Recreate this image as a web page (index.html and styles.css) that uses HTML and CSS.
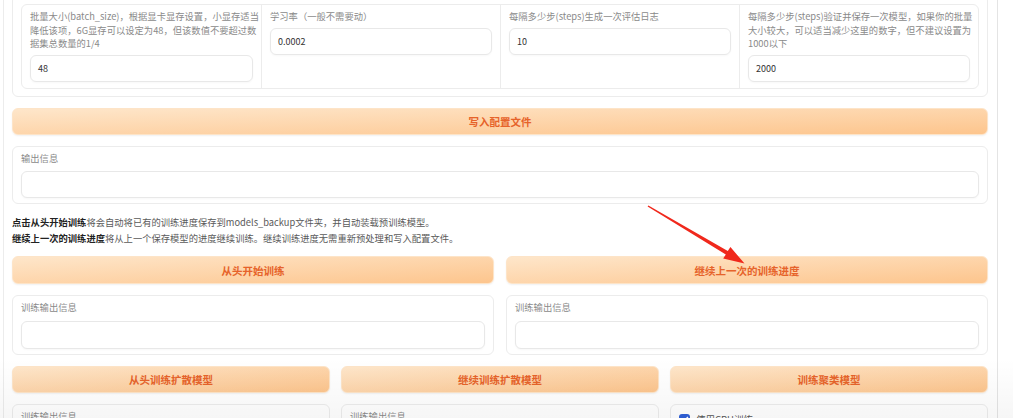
FILE: index.html
```html
<!DOCTYPE html>
<html lang="zh">
<head>
<meta charset="utf-8">
<link rel="stylesheet" href="styles.css">
</head>
<body>
<div class="page">
  <div class="panel top-panel">
    <div class="param-grid">
      <div class="param">
        <div class="label">批量大小(batch_size)，根据显卡显存设置，小显存适当<br>降低该项，6G显存可以设定为48，但该数值不要超过数<br>据集总数量的1/4</div>
        <div class="input">48</div>
      </div>
      <div class="param">
        <div class="label">学习率（一般不需要动）</div>
        <div class="input">0.0002</div>
      </div>
      <div class="param">
        <div class="label">每隔多少步(steps)生成一次评估日志</div>
        <div class="input">10</div>
      </div>
      <div class="param">
        <div class="label">每隔多少步(steps)验证并保存一次模型，如果你的批量<br>大小较大，可以适当减少这里的数字，但不建议设置为<br>1000以下</div>
        <div class="input">2000</div>
      </div>
    </div>
  </div>

  <button class="btn btn-wide">写入配置文件</button>

  <div class="panel out-panel">
    <div class="label">输出信息</div>
    <div class="textarea"></div>
  </div>

  <div class="note">
    <p><b>点击从头开始训练</b>将会自动将已有的训练进度保存到models_backup文件夹，并自动装载预训练模型。</p>
    <p><b>继续上一次的训练进度</b>将从上一个保存模型的进度继续训练。继续训练进度无需重新预处理和写入配置文件。</p>
  </div>

  <div class="row two">
    <button class="btn btn-tall">从头开始训练</button>
    <button class="btn btn-tall">继续上一次的训练进度</button>
  </div>

  <div class="row two">
    <div class="panel out-panel tall">
      <div class="label">训练输出信息</div>
      <div class="textarea"></div>
    </div>
    <div class="panel out-panel tall">
      <div class="label">训练输出信息</div>
      <div class="textarea"></div>
    </div>
  </div>

  <div class="row three">
    <button class="btn">从头训练扩散模型</button>
    <button class="btn">继续训练扩散模型</button>
    <button class="btn">训练聚类模型</button>
  </div>

  <div class="row three">
    <div class="panel out-panel tall">
      <div class="label">训练输出信息</div>
      <div class="textarea"></div>
    </div>
    <div class="panel out-panel tall">
      <div class="label">训练输出信息</div>
      <div class="textarea"></div>
    </div>
    <div class="panel out-panel tall">
      <label class="check"><span class="box"><svg viewBox="0 0 10 10" width="10" height="10"><path d="M2.2 5.2 L4.2 7.1 L7.9 3" fill="none" stroke="#fff" stroke-width="1.4"/></svg></span>使用CPU训练</label>
    </div>
  </div>
</div>

<svg class="arrow" width="1013" height="418" viewBox="0 0 1013 418">
  <polygon points="648.4,205.4 727.8,251.1 730.4,247.0 744.5,263.5 723.2,258.6 725.8,254.5 647.6,206.6" fill="#f0281c"/>
</svg>
<div class="shade"></div>
</body>
</html>
```

FILE: styles.css
```css
html, body {
  margin: 0;
  padding: 0;
  background: #ffffff;
}

body {
  position: relative;
  width: 1013px;
  height: 418px;
  overflow: hidden;
  font-family: "Noto Sans CJK SC", "Noto Sans", sans-serif;
  font-size: 9.3px;
  color: #444;
}

.page {
  box-sizing: border-box;
  width: 995px;
  margin-left: 3px;
  min-height: 440px;
  padding: 0 9px 0 8px;
  border-left: 1px solid #ececec;
  border-right: 1px solid #e4e4e4;
  background: #fff;
  display: flex;
  flex-direction: column;
  gap: 11px;
}

.panel {
  box-sizing: border-box;
  border: 1px solid #ececec;
  border-radius: 6px;
  background: #fff;
}

.top-panel {
  margin-top: -5px;
  padding: 8px 8px 7px 8px;
}

.param-grid {
  display: grid;
  grid-template-columns: repeat(4, minmax(0, 1fr));
  border: 1px solid #ececec;
  border-radius: 6px;
}

.param {
  padding: 5px 8px 6px 8px;
  border-left: 1px solid #ececec;
  min-width: 0;
}

.param:first-child {
  border-left: none;
}

.label {
  color: #8a8a8a;
  line-height: 13.5px;
  white-space: nowrap;
  margin-bottom: 4.5px;
}

.input {
  box-sizing: border-box;
  height: 27px;
  border: 1px solid #e8e8e8;
  border-radius: 6px;
  padding: 0 7px;
  display: flex;
  align-items: center;
  font-size: 9px;
  color: #333;
  box-shadow: 0 1px 2px rgba(0, 0, 0, 0.03);
}

.btn {
  box-sizing: border-box;
  height: 27px;
  border: 1px solid #fde4c8;
  border-radius: 6px;
  background: linear-gradient(to bottom right, #fee6ca, #fdc58d);
  color: #e6632a;
  font-family: inherit;
  font-size: 10.5px;
  font-weight: 700;
  padding: 0;
  box-shadow: 0 1px 2px rgba(0, 0, 0, 0.06);
}

.btn-tall {
  height: 28px;
}

.out-panel {
  padding: 5px 8px 5px 8px;
}

.out-panel .label {
  margin-bottom: 5.5px;
}

.textarea {
  box-sizing: border-box;
  height: 27px;
  border: 1px solid #e8e8e8;
  border-radius: 6px;
  background: #fff;
  box-shadow: 0 1px 2px rgba(0, 0, 0, 0.03);
}

.out-panel.tall .label {
  margin-bottom: 6.5px;
}

.out-panel.tall .textarea {
  height: 28px;
}

.note {
  margin: -1px 0 -1px 0;
  line-height: 16px;
  color: #5a5a5a;
}

.note p {
  margin: 0;
}

.note b {
  color: #222;
  font-weight: 700;
}

.row {
  display: grid;
}

.row.two {
  grid-template-columns: 1fr 1fr;
  gap: 12px;
}

.row.three {
  grid-template-columns: 1fr 1fr 1fr;
  gap: 11px;
}

.check {
  display: flex;
  align-items: center;
  gap: 6px;
  padding-top: 2px;
  color: #555;
  font-size: 9.5px;
  line-height: 14px;
}

.box {
  width: 11px;
  height: 11px;
  border-radius: 3px;
  background: #2f5fd6;
  display: flex;
  align-items: center;
  justify-content: center;
}

.arrow {
  position: absolute;
  left: 0;
  top: 0;
  pointer-events: none;
}

.shade {
  position: absolute;
  left: 0;
  right: 0;
  bottom: 0;
  height: 60px;
  background: linear-gradient(to bottom, rgba(0, 0, 0, 0), rgba(0, 0, 0, 0.035));
  pointer-events: none;
}
```
